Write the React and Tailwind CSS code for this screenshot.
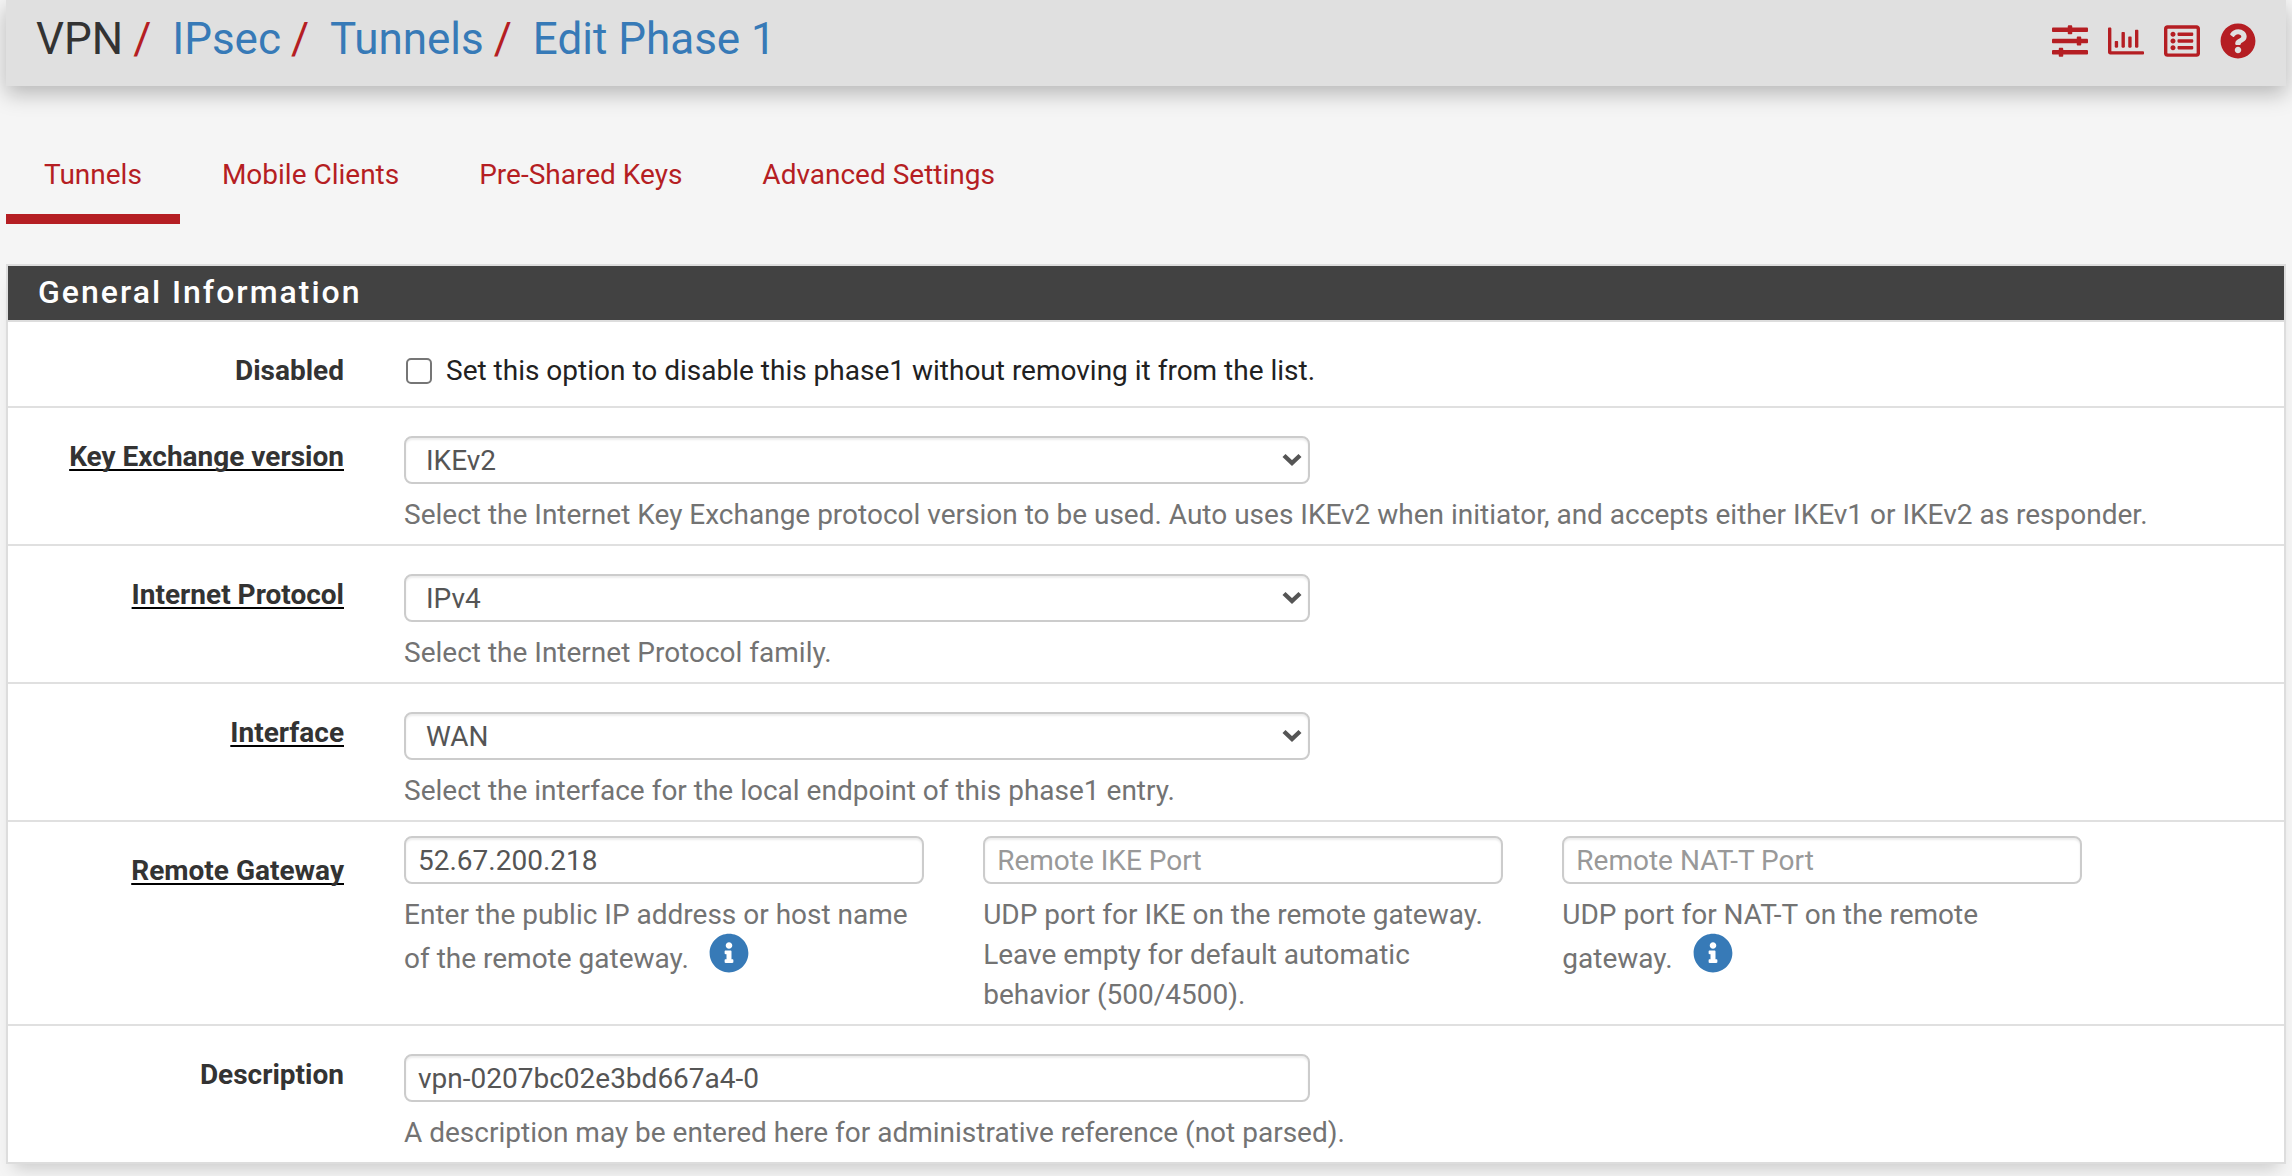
import { FaSlidersH, FaRegChartBar, FaRegListAlt, FaQuestionCircle, FaInfoCircle } from "react-icons/fa";

const field =
  "block h-12 rounded-lg border-2 border-[#ccc] bg-white text-[28px] text-[#555] placeholder:text-[#999] placeholder:opacity-100 outline-none shadow-[inset_0_2px_2px_rgba(0,0,0,0.075)]";

function Crumb({ children }) {
  return (
    <>
      <span className="ml-[10px] w-[39px] text-[#b51e23]">/</span>
      <a className="text-[#377ab7]">{children}</a>
    </>
  );
}

function Row({ label, required, compact, last, children }) {
  return (
    <div className={`flex ${last ? "" : "border-b-2 border-[#e0e0e0]"}`}>
      <label className="w-[336px] shrink-0 pt-[29px] text-right font-bold text-[#333]">
        <span
          className={
            required
              ? "underline decoration-black decoration-2 underline-offset-[3px] [text-decoration-skip-ink:none]"
              : ""
          }
        >
          {label}
        </span>
      </label>
      <div className={`ml-[60px] flex-1 pb-[9px] ${compact ? "pt-3.5" : "pt-7"}`}>{children}</div>
    </div>
  );
}

function Help({ children }) {
  return <p className="mt-[11px] text-[#737373]">{children}</p>;
}

function Select({ value }) {
  return (
    <div className="relative w-[906px]">
      <select className={`${field} w-full appearance-none pl-5 pt-px`} defaultValue={value}>
        <option>{value}</option>
      </select>
      <svg className="pointer-events-none absolute right-2 top-[17px] h-[14px] w-5" viewBox="0 0 20 14" fill="none">
        <path d="M2 2.5 L10 10 L18 2.5" stroke="#555" strokeWidth="4.4" />
      </svg>
    </div>
  );
}

function Info() {
  return (
    <FaInfoCircle className="relative -top-[2px] ml-5 inline-block size-10 align-[-7px] text-[#377ab7]" />
  );
}

export default function App() {
  return (
    <div className="h-[1176px] overflow-hidden bg-[#f5f5f5] px-1.5 font-[Roboto,sans-serif] text-[28px] leading-10 text-[#212121]">
      <header className="flex h-[86px] items-start justify-between bg-[#e0e0e0] px-[30px] shadow-[0_8px_20px_rgba(0,0,0,0.25)]">
        <h1 className="flex pt-[15px] text-[44px] leading-[48px] text-[#333]">
          <span>VPN</span>
          <Crumb>IPsec</Crumb>
          <Crumb>Tunnels</Crumb>
          <Crumb>Edit Phase 1</Crumb>
        </h1>
        <div className="flex gap-5 pt-[22.5px] text-[36px] text-[#b51e23]">
          <FaSlidersH />
          <FaRegChartBar />
          <FaRegListAlt />
          <FaQuestionCircle />
        </div>
      </header>

      <nav className="mt-[46px] flex h-[92px] gap-1 text-[#b51e23]">
        <a className="border-b-[10px] border-[#b51e23] px-[38px] pt-[23px]">Tunnels</a>
        <a className="px-[38px] pt-[23px]">Mobile Clients</a>
        <a className="px-[38px] pt-[23px]">Pre-Shared Keys</a>
        <a className="px-[38px] pt-[23px]">Advanced Settings</a>
      </nav>

      <section className="mt-10 border-2 border-[#ddd] bg-white shadow-[0_12px_16px_-8px_rgba(0,0,0,0.18)]">
        <h2 className="h-14 border-b-2 border-[#ddd] bg-[#424242] pl-[30px] text-[32px] font-medium leading-[53px] tracking-[2px] text-white">
          General Information
        </h2>

        <Row label="Disabled">
          <div className="flex h-[47px] items-start">
            <span className="ml-[2px] mt-2 size-[26px] rounded-[5px] border-2 border-[#767676] bg-white" />
            <span className="ml-[14px] mt-px">
              Set this option to disable this phase1 without removing it from the list.
            </span>
          </div>
        </Row>
        <Row label="Key Exchange version" required>
          <Select value="IKEv2" />
          <Help>
            Select the Internet Key Exchange protocol version to be used. Auto uses IKEv2 when initiator, and accepts
            either IKEv1 or IKEv2 as responder.
          </Help>
        </Row>
        <Row label="Internet Protocol" required>
          <Select value="IPv4" />
          <Help>Select the Internet Protocol family.</Help>
        </Row>
        <Row label="Interface" required>
          <Select value="WAN" />
          <Help>Select the interface for the local endpoint of this phase1 entry.</Help>
        </Row>
        <Row label="Remote Gateway" required compact>
          <div className="grid w-[1678px] grid-cols-3 gap-x-[59.5px]">
            <div>
              <input className={`${field} w-full px-3`} defaultValue="52.67.200.218" />
              <Help>
                Enter the public IP address or host name
                <br />
                of the remote gateway.
                <Info />
              </Help>
            </div>
            <div>
              <input className={`${field} w-full px-3`} placeholder="Remote IKE Port" />
              <Help>
                UDP port for IKE on the remote gateway. Leave empty for default automatic behavior (500/4500).
              </Help>
            </div>
            <div>
              <input className={`${field} w-full px-3`} placeholder="Remote NAT-T Port" />
              <Help>
                UDP port for NAT-T on the remote
                <br />
                gateway.
                <Info />
              </Help>
            </div>
          </div>
        </Row>
        <Row label="Description" last>
          <input className={`${field} w-[906px] px-3`} defaultValue="vpn-0207bc02e3bd667a4-0" />
          <Help>A description may be entered here for administrative reference (not parsed).</Help>
        </Row>
      </section>
    </div>
  );
}
